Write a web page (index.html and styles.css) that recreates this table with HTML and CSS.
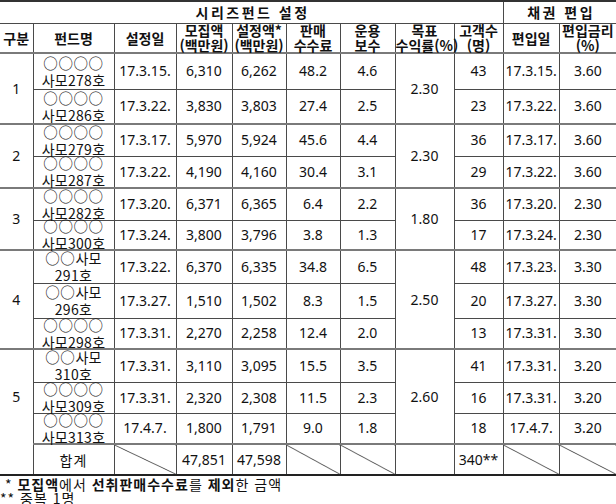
FILE: index.html
```html
<!DOCTYPE html>
<html lang="ko">
<head>
<meta charset="utf-8">
<link rel="stylesheet" href="styles.css">
</head>
<body>
<table class="fund">
  <colgroup>
    <col class="c-gb"><col class="c-nm"><col class="c-dt"><col class="c-mo"><col class="c-se"><col class="c-fee"><col class="c-op"><col class="c-tg"><col class="c-cu"><col class="c-in"><col class="c-rt">
  </colgroup>
  <thead>
    <tr class="h-top">
      <th colspan="9" class="sp">시리즈펀드 설정</th>
      <th colspan="2" class="sp">채권 편입</th>
    </tr>
    <tr class="h-sub">
      <th>구분</th><th>펀드명</th><th>설정일</th>
      <th><div class="two">모집액<br>(백만원)</div></th>
      <th><div class="two">설정액*<br>(백만원)</div></th>
      <th><div class="two">판매<br>수수료</div></th>
      <th><div class="two">운용<br>보수</div></th>
      <th><div class="two">목표<br>수익률(%)</div></th>
      <th><div class="two">고객수<br>(명)</div></th>
      <th>편입일</th>
      <th><div class="two">편입금리<br>(%)</div></th>
    </tr>
  </thead>
  <tbody>
    <tr class="gstart">
      <td rowspan="2">1</td><td><div class="nm"><span class="cc">○○○○</span><br>사모278호</div></td><td>17.3.15.</td><td>6,310</td><td>6,262</td><td>48.2</td><td>4.6</td><td rowspan="2">2.30</td><td>43</td><td>17.3.15.</td><td>3.60</td>
    </tr>
    <tr>
      <td><div class="nm"><span class="cc">○○○○</span><br>사모286호</div></td><td>17.3.22.</td><td>3,830</td><td>3,803</td><td>27.4</td><td>2.5</td><td>23</td><td>17.3.22.</td><td>3.60</td>
    </tr>
    <tr class="gstart">
      <td rowspan="2">2</td><td><div class="nm"><span class="cc">○○○○</span><br>사모279호</div></td><td>17.3.17.</td><td>5,970</td><td>5,924</td><td>45.6</td><td>4.4</td><td rowspan="2">2.30</td><td>36</td><td>17.3.17.</td><td>3.60</td>
    </tr>
    <tr>
      <td><div class="nm"><span class="cc">○○○○</span><br>사모287호</div></td><td>17.3.22.</td><td>4,190</td><td>4,160</td><td>30.4</td><td>3.1</td><td>29</td><td>17.3.22.</td><td>3.60</td>
    </tr>
    <tr class="gstart">
      <td rowspan="2">3</td><td><div class="nm"><span class="cc">○○○○</span><br>사모282호</div></td><td>17.3.20.</td><td>6,371</td><td>6,365</td><td>6.4</td><td>2.2</td><td rowspan="2">1.80</td><td>36</td><td>17.3.20.</td><td>2.30</td>
    </tr>
    <tr>
      <td><div class="nm"><span class="cc">○○○○</span><br>사모300호</div></td><td>17.3.24.</td><td>3,800</td><td>3,796</td><td>3.8</td><td>1.3</td><td>17</td><td>17.3.24.</td><td>2.30</td>
    </tr>
    <tr class="gstart">
      <td rowspan="3">4</td><td><div class="nm"><span class="cc">○○</span>사모<br>291호</div></td><td>17.3.22.</td><td>6,370</td><td>6,335</td><td>34.8</td><td>6.5</td><td rowspan="3">2.50</td><td>48</td><td>17.3.23.</td><td>3.30</td>
    </tr>
    <tr>
      <td><div class="nm"><span class="cc">○○</span>사모<br>296호</div></td><td>17.3.27.</td><td>1,510</td><td>1,502</td><td>8.3</td><td>1.5</td><td>20</td><td>17.3.27.</td><td>3.30</td>
    </tr>
    <tr>
      <td><div class="nm"><span class="cc">○○○○</span><br>사모298호</div></td><td>17.3.31.</td><td>2,270</td><td>2,258</td><td>12.4</td><td>2.0</td><td>13</td><td>17.3.31.</td><td>3.30</td>
    </tr>
    <tr class="gstart">
      <td rowspan="3" class="g5">5</td><td><div class="nm"><span class="cc">○○</span>사모<br>310호</div></td><td>17.3.31.</td><td>3,110</td><td>3,095</td><td>15.5</td><td>3.5</td><td rowspan="3">2.60</td><td>41</td><td>17.3.31.</td><td>3.20</td>
    </tr>
    <tr>
      <td><div class="nm"><span class="cc">○○○○</span><br>사모309호</div></td><td>17.3.31.</td><td>2,320</td><td>2,308</td><td>11.5</td><td>2.3</td><td>16</td><td>17.3.31.</td><td>3.20</td>
    </tr>
    <tr>
      <td><div class="nm"><span class="cc">○○○○</span><br>사모313호</div></td><td>17.4.7.</td><td>1,800</td><td>1,791</td><td>9.0</td><td>1.8</td><td>18</td><td>17.4.7.</td><td>3.20</td>
    </tr>
    <tr class="gstart total">
      <td class="blank-gb"></td><td class="sum">합계</td><td class="diag"></td><td>47,851</td><td>47,598</td><td class="diag"></td><td class="diag"></td><td></td><td>340**</td><td class="diag"></td><td class="diag"></td>
    </tr>
  </tbody>
</table>
<div class="notes">
  <p class="note"> * <b>모집액</b>에서 <b>선취판매수수료</b>를 <b>제외</b>한 금액</p>
  <p class="note">** 중복 1명</p>
</div>
</body>
</html>
```

FILE: styles.css
```css
html, body {
  margin: 0;
  padding: 0;
  background: #fff;
}

body {
  font-family: "Noto Sans", "Noto Sans CJK KR", sans-serif;
  font-size: 14px;
  color: #111;
}

.fund {
  border-collapse: collapse;
  table-layout: fixed;
  width: 616px;
  border-top: 2px solid #333;
  border-bottom: 2px solid #222;
  border-left: hidden;
  border-right: hidden;
}

.c-gb { width: 33px; }
.c-nm { width: 81px; }
.c-dt { width: 62px; }
.c-mo { width: 56px; }
.c-se { width: 54px; }
.c-fee { width: 54px; }
.c-op { width: 55px; }
.c-tg { width: 59px; }
.c-cu { width: 49px; }
.c-in { width: 56px; }
.c-rt { width: 57px; }

.fund th,
.fund td {
  border: 1px solid #4a4a4a;
  padding: 0;
  text-align: center;
  vertical-align: middle;
  white-space: nowrap;
  line-height: 16px;
  overflow: visible;
}

.fund th {
  font-family: "Noto Sans CJK KR", sans-serif;
  font-weight: 700;
  font-size: 14px;
}

.h-top { height: 22px; }
.h-top th.sp {
  letter-spacing: 2.5px;
  text-indent: 2.5px;
}

.h-sub { height: 30px; }
.h-sub th { border-bottom: 2px solid #7a7a7a; }

.two {
  line-height: 15px;
  margin: -2px 0;
}

.nm {
  font-family: "Noto Sans CJK KR", sans-serif;
  line-height: 17px;
  margin: -5px 0;
  letter-spacing: 0.3px;
}

.cc {
  font-size: 14.5px;
  line-height: 17px;
  letter-spacing: 0.6px;
}

.sum {
  font-family: "Noto Sans CJK KR", sans-serif;
  letter-spacing: 1px;
}

.gstart td { border-top: 2px solid #7a7a7a; }

tbody tr:nth-child(1) { height: 36px; }
tbody tr:nth-child(2) { height: 35px; }
tbody tr:nth-child(3) { height: 32px; }
tbody tr:nth-child(4) { height: 32px; }
tbody tr:nth-child(5) { height: 32px; }
tbody tr:nth-child(6) { height: 30px; }
tbody tr:nth-child(7) { height: 33px; }
tbody tr:nth-child(8) { height: 35px; }
tbody tr:nth-child(9) { height: 31px; }
tbody tr:nth-child(10) { height: 33px; }
tbody tr:nth-child(11) { height: 31px; }
tbody tr:nth-child(12) { height: 31px; }
tbody tr:nth-child(13) { height: 31px; }

.total td.blank-gb { border-top: hidden; }

.diag {
  background: linear-gradient(to top right, transparent calc(50% - 0.8px), #444 50%, transparent calc(50% + 0.8px));
}

.notes {
  padding-top: 1px;
}

.note {
  margin: 0;
  white-space: pre;
  line-height: 14px;
  font-size: 14px;
  letter-spacing: 1px;
  font-family: "Noto Sans CJK KR", sans-serif;
}

.note b { font-weight: 700; }
```
